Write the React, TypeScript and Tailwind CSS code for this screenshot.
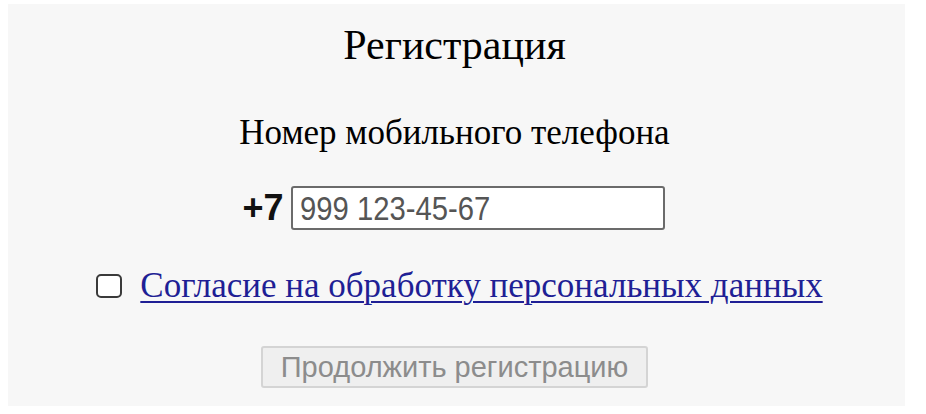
import React from "react";

export default function App() {
  return (
    <div className="w-[926px] h-[414px] bg-white pt-[4px] pl-[8px] pr-[21px] pb-[8px]">
      <div className="h-[402px] bg-[#f7f7f7] flex flex-col items-center pr-[4px] [font-family:'Liberation_Serif',serif] text-black">
        <h1 className="mt-[17px] text-[42px] leading-[48px] font-normal">Регистрация</h1>
        <div className="mt-[44px] text-[35px] leading-[40px]">Номер мобильного телефона</div>
        <div className="mt-[33px] flex items-center gap-[7px] h-[44px] pr-[2px]">
          <span className="[font-family:'Liberation_Sans',sans-serif] font-bold text-[36px] leading-[40px] text-[#111]">+7</span>
          <div className="w-[374px] h-[44px] border-2 border-[#6b6b6b] rounded-[3px] bg-white flex items-center pl-[7px] overflow-hidden">
            <span className="[font-family:'Liberation_Sans',sans-serif] text-[34px] leading-[40px] text-[#555] origin-left scale-x-[0.86] whitespace-nowrap">999 123-45-67</span>
          </div>
        </div>
        <div className="mt-[36px] h-[40px] flex items-center gap-[18px] pl-[10px]">
          <span className="w-[26px] h-[24px] border-2 border-[#3a3a3a] rounded-[5px] bg-white shrink-0"></span>
          <a href="#" className="text-[35px] leading-[40px] text-[#1f1f95] underline decoration-[2px] underline-offset-[4px] whitespace-nowrap">Согласие на обработку персональных данных</a>
        </div>
        <button className="mt-[40px] w-[387px] h-[42px] bg-[#efefef] border-2 border-[#d4d4d4] rounded-[3px] [font-family:'Liberation_Sans',sans-serif] text-[29px] leading-[36px] text-[#8c8c8c]">Продолжить регистрацию</button>
      </div>
    </div>
  );
}
